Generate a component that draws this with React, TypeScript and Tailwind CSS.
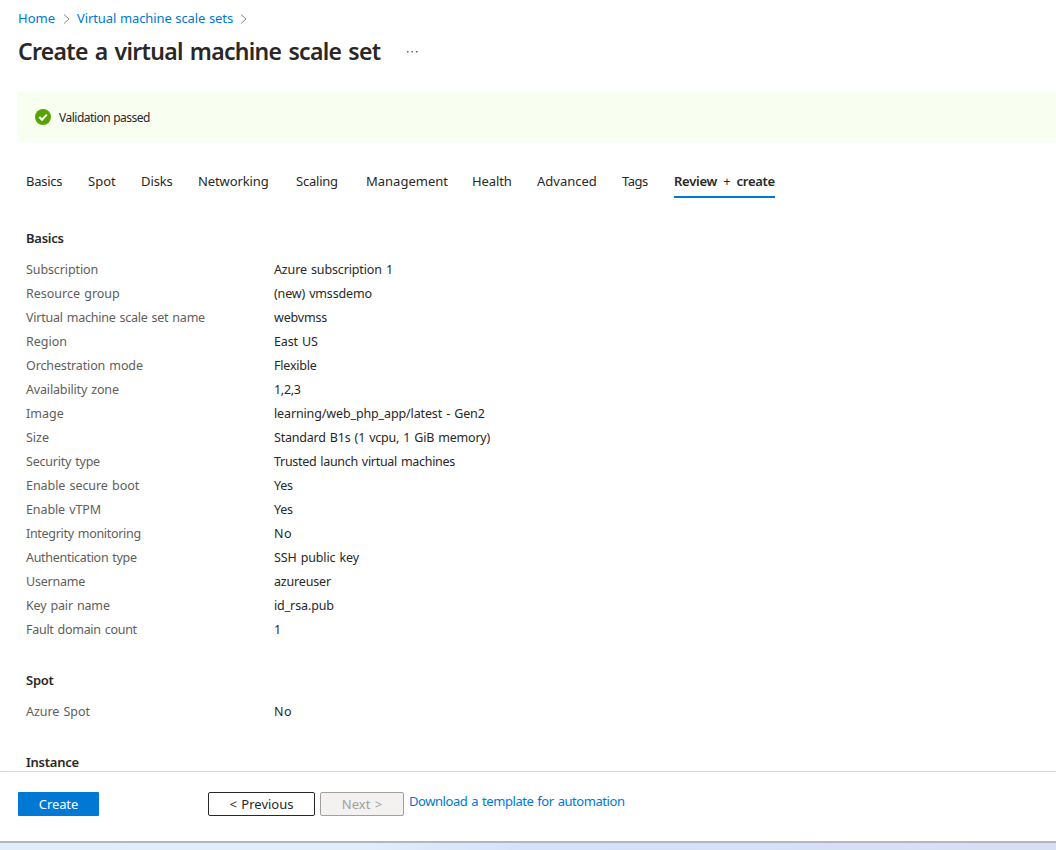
import type { ReactNode } from "react";

type Row = { label: string; value: string; labelClass?: string; valueClass?: string };

const basics: Row[] = [
  { label: "Subscription", value: "Azure subscription 1", labelClass: "tracking-[-0.1px]", valueClass: "tracking-[-0.14px]" },
  { label: "Resource group", value: "(new) vmssdemo", labelClass: "tracking-[-0.01px]", valueClass: "tracking-[-0.16px]" },
  { label: "Virtual machine scale set name", value: "webvmss", labelClass: "tracking-[-0.24px]", valueClass: "tracking-[-0.18px]" },
  { label: "Region", value: "East US", valueClass: "tracking-[-0.15px]" },
  { label: "Orchestration mode", value: "Flexible", labelClass: "tracking-[-0.13px]", valueClass: "tracking-[-0.2px]" },
  { label: "Availability zone", value: "1,2,3", labelClass: "tracking-[-0.16px]", valueClass: "tracking-[-0.3px]" },
  { label: "Image", value: "learning/web_php_app/latest - Gen2", valueClass: "tracking-[-0.13px]" },
  { label: "Size", value: "Standard B1s (1 vcpu, 1 GiB memory)", valueClass: "tracking-[-0.2px]" },
  { label: "Security type", value: "Trusted launch virtual machines", labelClass: "tracking-[-0.22px]", valueClass: "tracking-[-0.3px]" },
  { label: "Enable secure boot", value: "Yes", labelClass: "tracking-[-0.06px]", valueClass: "tracking-[-0.2px]" },
  { label: "Enable vTPM", value: "Yes", labelClass: "tracking-[-0.1px]", valueClass: "tracking-[-0.2px]" },
  { label: "Integrity monitoring", value: "No", labelClass: "tracking-[-0.3px]", valueClass: "tracking-[0.5px]" },
  { label: "Authentication type", value: "SSH public key", labelClass: "tracking-[-0.3px]", valueClass: "tracking-[-0.14px]" },
  { label: "Username", value: "azureuser", labelClass: "tracking-[-0.22px]", valueClass: "tracking-[-0.17px]" },
  { label: "Key pair name", value: "id_rsa.pub", labelClass: "tracking-[-0.17px]", valueClass: "tracking-[-0.12px]" },
  { label: "Fault domain count", value: "1", labelClass: "tracking-[-0.28px]" },
];

const spot: Row[] = [{ label: "Azure Spot", value: "No", labelClass: "tracking-[-0.05px]", valueClass: "tracking-[0.5px]" }];

const tabs = [
  { name: "Basics", className: "w-[62px] tracking-[-0.28px]" },
  { name: "Spot", className: "w-[53px]" },
  { name: "Disks", className: "w-[57px] tracking-[-0.1px]" },
  { name: "Networking", className: "w-[98px] tracking-[-0.1px]" },
  { name: "Scaling", className: "w-[70px] tracking-[-0.22px]" },
  { name: "Management", className: "w-[106px]" },
  { name: "Health", className: "w-[65px] tracking-[-0.1px]" },
  { name: "Advanced", className: "w-[85px]" },
  { name: "Tags", className: "w-[52px] tracking-[-0.5px]" },
];

function Chevron() {
  return (
    <svg width="7" height="10" viewBox="0 0 7 10" fill="none" stroke="#8a8886" strokeWidth="1" className="mt-0.5">
      <path d="M1 0.5L6 5L1 9.5" />
    </svg>
  );
}

function Section({ title, rows, className }: { title: string; rows: Row[]; className: string }) {
  return (
    <section className={className}>
      <Heading>{title}</Heading>
      <dl className="mt-2.5">
        {rows.map((row) => (
          <div key={row.label} className="flex h-6 items-center [word-spacing:1px]">
            <dt className="w-[248px] shrink-0 text-[#605e5c]">
              <span className={row.labelClass}>{row.label}</span>
            </dt>
            <dd className="text-[#292827]">
              <span className={row.valueClass}>{row.value}</span>
            </dd>
          </div>
        ))}
      </dl>
    </section>
  );
}

function Heading({ children }: { children: ReactNode }) {
  return (
    <h2 className="h-5 text-[13px] leading-5 font-semibold tracking-[-0.25px] text-[#292827]">{children}</h2>
  );
}

export default function App() {
  return (
    <div className="flex h-[850px] w-full flex-col overflow-hidden bg-white font-['Noto_Sans',sans-serif] text-[12.5px] leading-5 whitespace-nowrap text-[#292827]">
      <main className="h-[771px] shrink-0 overflow-hidden">
        <nav className="flex h-9 items-center pl-[18px] text-[13px] text-[#0078d4]">
          <a className="w-[45px]">Home</a>
          <Chevron />
          <a className="ml-[7px] w-[163px] tracking-[-0.1px] [word-spacing:0.4px]">Virtual machine scale sets</a>
          <Chevron />
        </nav>
        <header className="flex h-8 items-center pl-[18px]">
          <h1 className="w-[388px] text-[23px] leading-[30px] font-semibold tracking-[-0.7px] [word-spacing:1.8px]">
            <span className="block pb-0.5">Create a virtual machine scale set</span>
          </h1>
          <svg width="13" height="2" viewBox="0 0 13 2" fill="#605e5c">
            <rect x="1" y="0" width="1.5" height="1.5" />
            <rect x="5.5" y="0" width="1.5" height="1.5" />
            <rect x="10" y="0" width="1.5" height="1.5" />
          </svg>
        </header>
        <div className="mt-6 ml-[18px] flex h-[50px] items-center gap-2 bg-[#f8fff0] pl-[17px] text-[12px]">
          <svg width="16" height="16" viewBox="0 0 16 16">
            <circle cx="8" cy="8" r="8" fill="#57a300" />
            <path d="M4.3 8L7 10.7L11.8 5.6" fill="none" stroke="#fff" strokeWidth="2" />
          </svg>
          <span className="pt-0.5 tracking-[-0.5px] [word-spacing:0.5px]">Validation passed</span>
        </div>
        <div role="tablist" className="mt-[23px] flex h-[33px] pl-[26px] text-[13px] leading-[33px]">
          {tabs.map((tab) => (
            <div key={tab.name} role="tab" className={tab.className}>
              {tab.name}
            </div>
          ))}
          <div
            role="tab"
            className="w-[101px] border-b-2 border-[#0078d4] font-semibold tracking-[-0.26px] [word-spacing:3px]"
          >
            Review <span className="font-normal">+</span> create
          </div>
        </div>
        <div className="pl-[26px]">
          <Section className="mt-[30px]" title="Basics" rows={basics} />
          <Section className="mt-7" title="Spot" rows={spot} />
          <div className="mt-7">
            <Heading>Instance</Heading>
          </div>
        </div>
      </main>
      <footer className="flex h-[70px] shrink-0 items-start border-t border-[#d9d9d9] pt-5 pl-[18px] text-[13px]">
        <button className="h-6 w-[81px] rounded-[1px] bg-[#0078d4] tracking-[-0.1px] text-white">Create</button>
        <button className="ml-[109px] h-6 w-[107px] rounded-xs border border-[#292827] [word-spacing:1px]">
          &lt; Previous
        </button>
        <button className="ml-[5px] h-6 w-[84px] rounded-xs border border-[#a19f9d] bg-[#f3f2f1] text-[#a19f9d] [word-spacing:1px]">
          Next &gt;
        </button>
        <a className="ml-[5px] leading-[18px] tracking-[-0.44px] text-[#0078d4] [word-spacing:1px]">
          Download a template for automation
        </a>
      </footer>
      <div className="h-[9px] shrink-0 border-t-2 border-[#b0b7c3] bg-linear-to-r from-[#e1edf9] from-35% via-[#d5e1f9] via-50% to-[#d7dff2]" />
    </div>
  );
}
